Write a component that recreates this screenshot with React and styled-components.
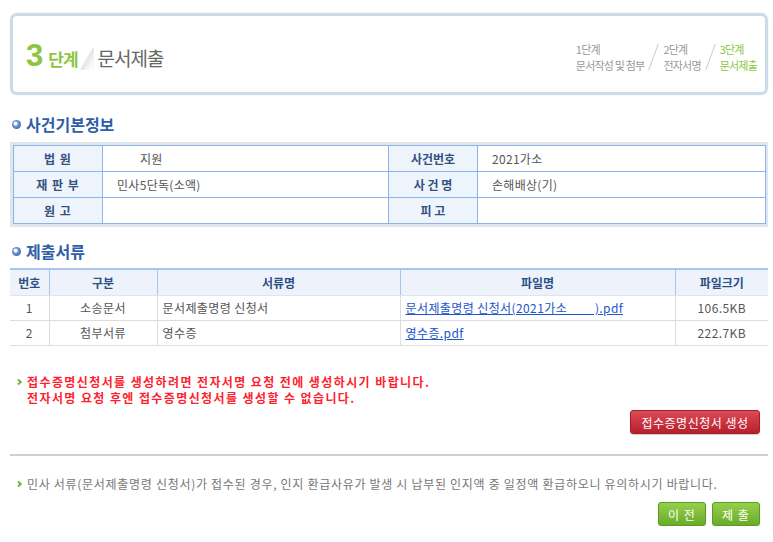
import React from 'react';
import styled, { createGlobalStyle } from 'styled-components';

const GlobalStyle = createGlobalStyle`
  body {
    margin: 0;
    background: #fff;
    font-family: "Noto Sans CJK KR", "Noto Sans", sans-serif;
    font-size: 12px;
    line-height: 16px;
    color: #555;
  }
`;

const Page = styled.div`
  width: 758px;
  padding: 13px 5px 0 10px;
`;

const StepBox = styled.div`
  height: 70px;
  border: 3px solid #cadcea;
  border-radius: 7px;
  box-shadow: 0 0 1px #b8cfe2;
  display: flex;
  align-items: center;
  justify-content: space-between;
  padding: 6px 8px 0 13px;
  box-sizing: content-box;
`;

const StepTitle = styled.div`
  display: flex;
  align-items: baseline;
  letter-spacing: -1px;
  line-height: 34px;
`;

const StepNum = styled.span`
  font-size: 31px;
  font-weight: bold;
  color: #8cc63f;
  font-family: "Liberation Sans", sans-serif;
  margin-right: 6px;
`;

const StepWord = styled.span`
  font-size: 17px;
  font-weight: bold;
  color: #8cc63f;
`;

const Fold = styled.span`
  display: inline-block;
  width: 14px;
  height: 22px;
  margin: 0 4px 0 2px;
  background: linear-gradient(120deg, transparent 45%, #e4e4e4 50%, #fafafa 80%);
  transform: translateY(4px);
`;

const StepName = styled.span`
  font-size: 19px;
  color: #666;
`;

const StepList = styled.div`
  display: flex;
  align-items: center;
`;

const StepItem = styled.div`
  font-size: 11px;
  line-height: 16px;
  color: ${p => (p.$active ? '#8cc63f' : '#999')};
  letter-spacing: -0.8px;
`;

const Slash = styled.span`
  display: inline-block;
  width: 1px;
  height: 28px;
  background: #ccc;
  transform: rotate(20deg);
  margin: 0 9px;
`;

const SectionTitle = styled.h2`
  display: flex;
  align-items: center;
  gap: 5px;
  margin: ${p => p.$top} 0 ${p => p.$bottom} 2px;
  font-size: 16px;
  line-height: 18px;
  font-weight: bold;
  color: #2f5ea8;
`;

const Bullet = styled.span`
  width: 9px;
  height: 9px;
  border-radius: 50%;
  background: radial-gradient(circle at 40% 40%, #fff 0 20%, #7fa1d8 30%, #2f5ea8 80%);
`;

const InfoWrap = styled.div`
  background: #dfe6ee;
  padding: 3px 2px 3px 3px;
`;

const InfoTable = styled.table`
  width: 100%;
  border-collapse: collapse;
  background: #fff;
  table-layout: fixed;
`;

const InfoTh = styled.th`
  height: 25px;
  padding: 0;
  background: #eef4fc;
  border: 1px solid #8eb3e8;
  font-size: 12px;
  font-weight: bold;
  color: #34507e;
  letter-spacing: ${p => p.$spread || '0'};
`;

const InfoTd = styled.td`
  padding: 0 0 0 ${p => p.$pad || '14px'};
  border: 1px solid #8eb3e8;
  color: #555;
  letter-spacing: 0.3px;
`;

const DocTable = styled.table`
  width: 100%;
  border-collapse: collapse;
  table-layout: fixed;
  border-top: 2px solid #a7c4ee;
`;

const DocTh = styled.th`
  height: 25px;
  padding: 0;
  background: #eef3fb;
  border-left: 1px solid #a7c4ee;
  border-bottom: 1px solid #dde5f0;
  font-weight: bold;
  color: #2c4f86;
  &:first-child { border-left: none; }
`;

const DocTd = styled.td`
  height: 24px;
  padding: 0 0 0 ${p => (p.$align === 'left' ? '5px' : '0')};
  border-left: 1px solid #ddd;
  border-bottom: 1px solid #ddd;
  text-align: ${p => p.$align || 'center'};
  color: #555;
  letter-spacing: 0.4px;
  &:first-child { border-left: none; }
`;

const FileLink = styled.a`
  color: #2255cc;
  text-decoration: underline;
`;

const Notice = styled.div`
  margin-top: 28px;
  padding-left: 7px;
  display: flex;
  gap: 5px;
`;

const Chevron = () => (
  <svg width="5" height="16" viewBox="0 0 5 16">
    <path d="M1 5.5 L3.8 8 L1 10.5" fill="none" stroke="#74b136" strokeWidth="1.8" />
  </svg>
);

const Warn = styled.p`
  margin: 0;
  color: #ff1e2e;
  font-weight: bold;
  letter-spacing: 1.4px;
`;

const ButtonRow = styled.div`
  display: flex;
  justify-content: flex-end;
  gap: 6px;
  padding-right: 8px;
  margin-top: ${p => p.$top || '0'};
`;

const RedButton = styled.button`
  width: 130px;
  height: 24px;
  padding: 0;
  border: 1px solid #a31c27;
  border-radius: 3px;
  background: linear-gradient(#dc4b56, #b81f2c);
  color: #fff;
  font-family: inherit;
  font-size: 12px;
  letter-spacing: 0.5px;
  box-shadow: 0 1px 1px #ccc;
`;

const GreenButton = styled.button`
  width: 48px;
  height: 24px;
  padding: 0;
  border: 1px solid #5c9a22;
  border-radius: 3px;
  background: linear-gradient(#94d04c, #6aab2b);
  color: #fff;
  font-family: inherit;
  font-size: 12px;
  letter-spacing: 1px;
  box-shadow: 0 1px 1px #ccc;
`;

const Divider = styled.hr`
  margin: 20px 0 0;
  border: none;
  border-top: 2px solid #cfcfcf;
`;

const Note = styled.div`
  margin-top: 20px;
  padding-left: 7px;
  display: flex;
  gap: 5px;
  color: #777;
  letter-spacing: 0.7px;
`;

const infoRows = [
  ['법 원', '지원', '사건번호', '2021가소'],
  ['재 판 부', '민사5단독(소액)', '사 건 명', '손해배상(기)'],
  ['원 고', '', '피 고', ''],
];

const docs = [
  { no: 1, kind: '소송문서', name: '문서제출명령 신청서', file: '문서제출명령 신청서(2021가소\u00a0\u00a0\u00a0\u00a0\u00a0\u00a0\u00a0\u00a0\u00a0).pdf', size: '106.5KB' },
  { no: 2, kind: '첨부서류', name: '영수증', file: '영수증.pdf', size: '222.7KB' },
];

export default function App() {
  return (
    <Page>
      <GlobalStyle />
      <StepBox>
        <StepTitle>
          <StepNum>3</StepNum>
          <StepWord>단계</StepWord>
          <Fold />
          <StepName>문서제출</StepName>
        </StepTitle>
        <StepList>
          <StepItem>1단계<br />문서작성 및 첨부</StepItem>
          <Slash />
          <StepItem>2단계<br />전자서명</StepItem>
          <Slash />
          <StepItem $active>3단계<br />문서제출</StepItem>
        </StepList>
      </StepBox>

      <SectionTitle $top="20px" $bottom="9px"><Bullet />사건기본정보</SectionTitle>
      <InfoWrap>
        <InfoTable>
          <colgroup>
            <col style={{ width: 89 }} />
            <col style={{ width: 286 }} />
            <col style={{ width: 89 }} />
            <col />
          </colgroup>
          <tbody>
            {infoRows.map((r, i) => (
              <tr key={i}>
                <InfoTh $spread={r[0].includes(' ') ? '1px' : '0'}>{r[0]}</InfoTh>
                <InfoTd $pad={i === 0 ? '37px' : '14px'}>{r[1]}</InfoTd>
                <InfoTh>{r[2]}</InfoTh>
                <InfoTd>{r[3]}</InfoTd>
              </tr>
            ))}
          </tbody>
        </InfoTable>
      </InfoWrap>

      <SectionTitle $top="15px" $bottom="8px"><Bullet />제출서류</SectionTitle>
      <DocTable>
        <colgroup>
          <col style={{ width: 39 }} />
          <col style={{ width: 108 }} />
          <col style={{ width: 243 }} />
          <col style={{ width: 275 }} />
          <col />
        </colgroup>
        <thead>
          <tr>
            <DocTh>번호</DocTh>
            <DocTh>구분</DocTh>
            <DocTh>서류명</DocTh>
            <DocTh>파일명</DocTh>
            <DocTh>파일크기</DocTh>
          </tr>
        </thead>
        <tbody>
          {docs.map(d => (
            <tr key={d.no}>
              <DocTd>{d.no}</DocTd>
              <DocTd>{d.kind}</DocTd>
              <DocTd $align="left">{d.name}</DocTd>
              <DocTd $align="left"><FileLink href="#">{d.file}</FileLink></DocTd>
              <DocTd>{d.size}</DocTd>
            </tr>
          ))}
        </tbody>
      </DocTable>

      <Notice>
        <Chevron />
        <div>
          <Warn>접수증명신청서를 생성하려면 전자서명 요청 전에 생성하시기 바랍니다.</Warn>
          <Warn>전자서명 요청 후엔 접수증명신청서를 생성할 수 없습니다.</Warn>
        </div>
      </Notice>
      <ButtonRow $top="4px">
        <RedButton>접수증명신청서 생성</RedButton>
      </ButtonRow>

      <Divider />
      <Note>
        <Chevron />
        <span>민사 서류(문서제출명령 신청서)가 접수된 경우, 인지 환급사유가 발생 시 납부된 인지액 중 일정액 환급하오니 유의하시기 바랍니다.</span>
      </Note>
      <ButtonRow $top="10px">
        <GreenButton>이 전</GreenButton>
        <GreenButton>제 출</GreenButton>
      </ButtonRow>
    </Page>
  );
}
